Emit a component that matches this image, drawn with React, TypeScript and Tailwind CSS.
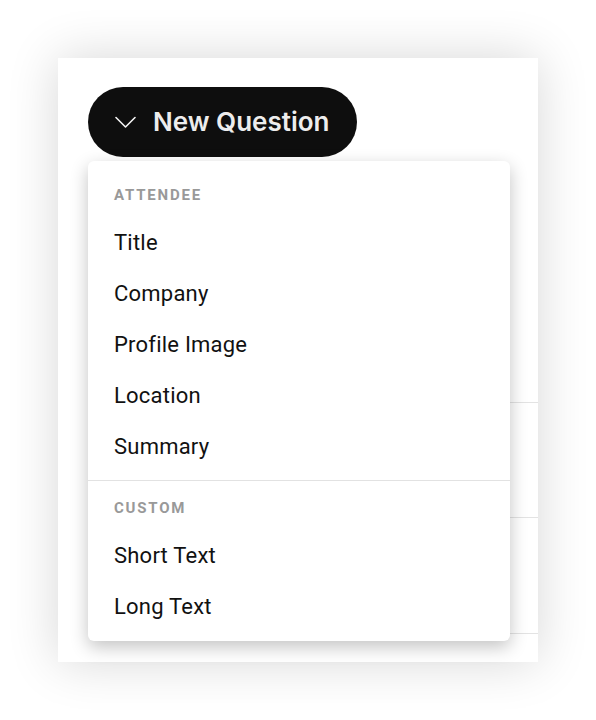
import React from 'react';

const attendeeFields = ['Title', 'Company', 'Profile Image', 'Location', 'Summary'];
const customFields = ['Short Text', 'Long Text'];

function Chevron() {
  return (
    <svg width="21" height="13" viewBox="0 0 21 13" fill="none" className="shrink-0">
      <polyline points="1,1.5 10.5,11 20,1.5" stroke="#f2f2f2" strokeWidth="1.6" strokeLinecap="round" strokeLinejoin="round" />
    </svg>
  );
}

function SectionHeader({ label, className }: { label: string; className: string }) {
  return (
    <div className={`px-[26px] pb-3 text-[15px] leading-5 font-bold tracking-[0.12em] text-[#999999] ${className}`}>
      {label}
    </div>
  );
}

function MenuItem({ label }: { label: string }) {
  return (
    <div className="flex h-[51px] items-center px-[26px] text-[22px] tracking-[0.01em] text-[#111111] hover:bg-gray-50 cursor-pointer">
      {label}
    </div>
  );
}

export default function App() {
  return (
    <div className="min-h-[720px] w-[596px] bg-white p-[58px]" style={{ fontFamily: 'Roboto, "Liberation Sans", sans-serif' }}>
      <div className="relative h-[604px] w-[480px] bg-white pl-[30px] pt-[29px] shadow-[0_0_48px_rgba(0,0,0,0.16)]">
        {/* Trigger */}
        <button
          className="flex h-[70px] items-center gap-[17px] rounded-full bg-[#0e0e0e] pl-[27px] pr-[27px] text-[26px] font-semibold text-[#ededed]"
          style={{ fontFamily: 'Inter, "Liberation Sans", sans-serif' }}
        >
          <Chevron />
          <span className="leading-none">New Question</span>
        </button>

        {/* Rows behind the menu */}
        <div className="mt-[131px]">
          <div className="h-[115px] border-b border-[#e3e3e3]" />
          <div className="h-[115px] border-b border-[#e3e3e3]" />
          <div className="h-[116px] border-b border-[#e3e3e3]" />
        </div>

        {/* Dropdown */}
        <div className="absolute left-[30px] top-[103px] w-[422px] rounded-[6px] bg-white pt-2 pb-[9px] shadow-[0_6px_18px_rgba(0,0,0,0.24)]">
          <SectionHeader label="ATTENDEE" className="pt-4" />
          {attendeeFields.map((f) => (
            <MenuItem key={f} label={f} />
          ))}
          <div className="mt-2 h-px bg-[#e2e2e2]" />
          <SectionHeader label="CUSTOM" className="pt-[17px]" />
          {customFields.map((f) => (
            <MenuItem key={f} label={f} />
          ))}
        </div>
      </div>
    </div>
  );
}
